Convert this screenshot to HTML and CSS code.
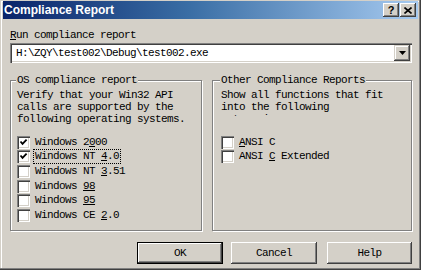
FILE: index.html
```html
<!DOCTYPE html>
<html lang="en">
<head>
    <meta charset="UTF-8">
    <title>Compliance Report</title>
    <link rel="stylesheet" href="styles.css">
</head>
<body>
    <div class="window">
        <div class="titlebar">
            <span class="title">Compliance Report</span>
            <div class="caption-btns">
                <span class="cap-btn">?</span>
                <span class="cap-btn close">
                    <svg width="8" height="7" viewBox="0 0 8 7"><path d="M0.5 0.5 L7.5 6.5 M7.5 0.5 L0.5 6.5" stroke="#000" stroke-width="1.6"/></svg>
                </span>
            </div>
        </div>
        <div class="content">
            <div class="field-label"><u>R</u>un compliance report</div>
            <div class="combo">
                <span class="combo-text">H:\ZQY\test002\Debug\test002.exe</span>
                <span class="combo-btn">
                    <svg width="7" height="4" viewBox="0 0 7 4"><path d="M0 0 H7 L3.5 4 Z" fill="#000"/></svg>
                </span>
            </div>
            <div class="groups">
                <fieldset class="group">
                    <legend>OS compliance report</legend>
                    <p class="group-text">Verify that your Win32 API<br>calls are supported by the<br>following operating systems.</p>
                    <div class="check-list">
                        <div class="check-row"><span class="box checked"><svg width="9" height="9" viewBox="0 0 9 9"><path d="M1.5 3.5 L3.5 5.8 L7.6 1.6" stroke="#000" stroke-width="1.8" fill="none"/></svg></span><span class="check-label">Windows 2<u>0</u>00</span></div>
                        <div class="check-row"><span class="box checked"><svg width="9" height="9" viewBox="0 0 9 9"><path d="M1.5 3.5 L3.5 5.8 L7.6 1.6" stroke="#000" stroke-width="1.8" fill="none"/></svg></span><span class="check-label focus">Windows NT <u>4</u>.0</span></div>
                        <div class="check-row"><span class="box"></span><span class="check-label">Windows NT <u>3</u>.51</span></div>
                        <div class="check-row"><span class="box"></span><span class="check-label">Windows <u>98</u></span></div>
                        <div class="check-row"><span class="box"></span><span class="check-label">Windows <u>95</u></span></div>
                        <div class="check-row"><span class="box"></span><span class="check-label">Windows CE <u>2</u>.0</span></div>
                    </div>
                </fieldset>
                <fieldset class="group">
                    <legend>Other Compliance Reports</legend>
                    <p class="group-text clipped">Show all functions that fit<br>into the following<br>categories:</p>
                    <div class="check-list">
                        <div class="check-row"><span class="box"></span><span class="check-label"><u>A</u>NSI C</span></div>
                        <div class="check-row"><span class="box"></span><span class="check-label">ANSI <u>C</u> Extended</span></div>
                    </div>
                </fieldset>
            </div>
            <div class="buttons">
                <button class="btn default">OK</button>
                <button class="btn">Cancel</button>
                <button class="btn help">Help</button>
            </div>
        </div>
    </div>
</body>
</html>
```

FILE: styles.css
```css
html, body {
    margin: 0;
    padding: 0;
    background: #d4d0c8;
}
.window {
    width: 421px;
    height: 270px;
    box-sizing: border-box;
    padding: 1px 3px 3px 3px;
    background: #d4d0c8;
    box-shadow: inset -1px -1px #404040, inset -2px -2px #808080, inset 1px 1px #d4d0c8, inset 2px 2px #fff;
    font-family: "Liberation Mono", "DejaVu Sans Mono", monospace;
    font-size: 11px;
    letter-spacing: -0.6px;
    color: #000;
}
.titlebar {
    height: 18px;
    display: flex;
    align-items: center;
    justify-content: space-between;
    padding: 0 2px 0 1px;
    background: linear-gradient(to right, #0a246a, #3a6ea5 45%, #a6caf0);
}
.title {
    font-family: "Liberation Sans", Arial, sans-serif;
    font-weight: bold;
    font-size: 12px;
    letter-spacing: 0;
    color: #fff;
}
.caption-btns {
    display: flex;
    gap: 1px;
}
.cap-btn {
    width: 16px;
    height: 14px;
    box-sizing: border-box;
    display: flex;
    align-items: center;
    justify-content: center;
    background: #d4d0c8;
    box-shadow: inset -1px -1px #404040, inset 1px 1px #fff, inset -2px -2px #808080;
    font-family: "Liberation Sans", Arial, sans-serif;
    font-weight: bold;
    font-size: 11px;
    letter-spacing: 0;
}
.content {
    padding: 9px 6px 0 7px;
}
.field-label {
    height: 14px;
    line-height: 14px;
}
.combo {
    margin-top: 1px;
    height: 20px;
    box-sizing: border-box;
    display: flex;
    align-items: center;
    justify-content: space-between;
    padding: 2px;
    background: #fff;
    box-shadow: inset 1px 1px #808080, inset 2px 2px #404040, inset -1px -1px #fff, inset -2px -2px #d4d0c8;
}
.combo-text {
    padding-left: 4px;
}
.combo-btn {
    width: 16px;
    height: 16px;
    box-sizing: border-box;
    display: flex;
    align-items: center;
    justify-content: center;
    background: #d4d0c8;
    box-shadow: inset -1px -1px #404040, inset 1px 1px #d4d0c8, inset -2px -2px #808080, inset 2px 2px #fff;
}
.groups {
    margin-top: 10px;
    display: grid;
    grid-template-columns: 192px 1fr;
    gap: 10px;
    height: 158px;
}
.group {
    margin: 0;
    padding: 2px 6px 0 6px;
    min-width: 0;
    border: 1px solid #808080;
    box-shadow: 1px 1px #fff, inset 1px 1px #fff;
}
.group legend {
    padding: 0 1px;
    margin-left: -1px;
    line-height: 14px;
    background: #d4d0c8;
}
.group-text {
    margin: 0 0 10px 0;
    line-height: 12px;
}
.group-text.clipped {
    height: 27px;
    overflow: hidden;
    margin-bottom: 19px;
}
.group:last-child {
    padding-left: 8px;
}
.check-row {
    height: 14.6px;
    display: flex;
    align-items: center;
}
.box {
    width: 13px;
    height: 13px;
    box-sizing: border-box;
    flex: none;
    display: flex;
    align-items: center;
    justify-content: center;
    margin-right: 4px;
    background: #fff;
    box-shadow: inset 1px 1px #808080, inset 2px 2px #404040, inset -1px -1px #fff, inset -2px -2px #d4d0c8;
}
.check-label {
    padding: 0 1px;
    line-height: 13px;
}
.check-label.focus {
    outline: 1px dotted #000;
}
.buttons {
    margin-top: 11px;
    display: flex;
    justify-content: flex-end;
    gap: 8px;
}
.btn {
    width: 86px;
    height: 22px;
    box-sizing: border-box;
    margin: 0;
    padding: 0;
    border: none;
    background: #d4d0c8;
    font: inherit;
    letter-spacing: inherit;
    color: #000;
    box-shadow: inset -1px -1px #404040, inset 1px 1px #fff, inset -2px -2px #808080, inset 2px 2px #d4d0c8;
}
.btn.default {
    box-shadow: inset 0 0 0 1px #000, inset -2px -2px #404040, inset 2px 2px #fff, inset -3px -3px #808080;
}
.btn.help {
    width: 85px;
    margin-left: 2px;
}
```
